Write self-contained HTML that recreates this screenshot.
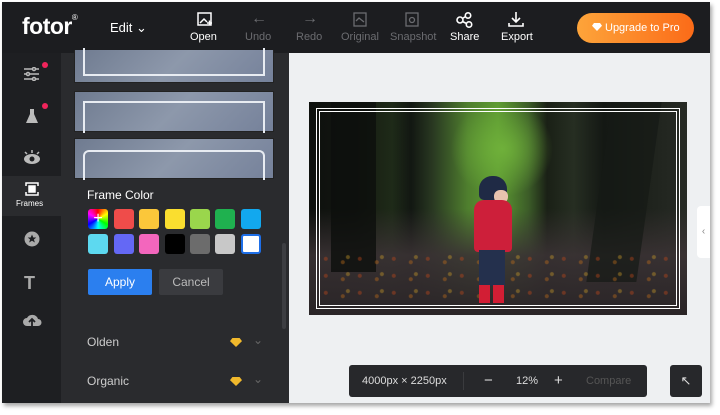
<!DOCTYPE html>
<html><head><style>
*{margin:0;padding:0;box-sizing:border-box}
body{width:720px;height:415px;background:#fff;font-family:"Liberation Sans",sans-serif;position:relative;overflow:hidden}
.app{position:absolute;left:2px;top:2px;width:708px;height:401px;background:#eef0f2;box-shadow:2px 3px 4px rgba(0,0,0,.35);overflow:hidden}
.hdr{position:absolute;left:0;top:0;width:708px;height:51px;background:#1c1d20}
.t{position:absolute;color:#fff;font-size:11px;text-align:center}
.g{color:#6b6c70}
.side{position:absolute;left:0;top:51px;width:59px;height:350px;background:#1e1f22}
.panel{position:absolute;left:59px;top:51px;width:228px;height:350px;background:#2a2b2e}
.thumb{position:absolute;left:13px;width:200px;background:linear-gradient(135deg,#6f7b90,#8d98ab 50%,#75819a);border:1px solid #222}
.sw{position:absolute;width:20px;height:20px;border-radius:3px}
.dot{position:absolute;width:6px;height:6px;border-radius:3px;background:#f0245b}
.p{position:absolute}
</style></head><body>
<div class="app">
<div class="hdr">
 <div class="t" style="left:20px;top:11px;font-size:23px;font-weight:bold;letter-spacing:-.5px">fotor<sup style="font-size:8px;vertical-align:top;font-weight:normal">®</sup></div>
 <div class="t" style="left:108px;top:18px;font-size:13px">Edit ⌄</div>
 <svg style="position:absolute;left:195px;top:10px" width="16" height="16" fill="none" stroke="#fff" stroke-width="1.5"><rect x="1" y="1" width="13" height="12"/><path d="M3 11l4-4 3 3M10 11h5M12.5 8.5v5"/></svg>
 <div class="t" style="left:188px;top:29px">Open</div>
 <div class="t g" style="left:249px;top:8px;font-size:16px">←</div><div class="t g" style="left:243px;top:29px">Undo</div>
 <div class="t g" style="left:300px;top:8px;font-size:16px">→</div><div class="t g" style="left:294px;top:29px">Redo</div>
 <svg style="position:absolute;left:351px;top:10px" width="14" height="15" fill="none" stroke="#6b6c70" stroke-width="1.3"><rect x="1" y="1" width="12" height="13"/><path d="M3 9l3-3 5 4"/></svg>
 <div class="t g" style="left:339px;top:29px">Original</div>
 <svg style="position:absolute;left:403px;top:10px" width="14" height="15" fill="none" stroke="#6b6c70" stroke-width="1.3"><rect x="1" y="1" width="12" height="13"/><circle cx="7" cy="8" r="2.5"/></svg>
 <div class="t g" style="left:388px;top:29px">Snapshot</div>
 <svg style="position:absolute;left:454px;top:10px" width="18" height="16" fill="none" stroke="#fff" stroke-width="1.6"><circle cx="4" cy="8" r="3"/><circle cx="12" cy="3.5" r="2.7"/><circle cx="13" cy="12.5" r="2.7"/><path d="M6.5 6.5l3-2M6.5 9.5l4 2"/></svg>
 <div class="t" style="left:448px;top:29px">Share</div>
 <svg style="position:absolute;left:506px;top:9px" width="16" height="17" fill="none" stroke="#fff" stroke-width="1.6"><path d="M8 1v10M4 7l4 4 4-4M1 12v3h14v-3"/></svg>
 <div class="t" style="left:499px;top:29px">Export</div>
 <div style="position:absolute;left:575px;top:11px;width:117px;height:30px;border-radius:15px;background:linear-gradient(90deg,#fda43a,#fb6b18);color:#fff;font-size:11px;line-height:30px;padding-left:28px">Upgrade to Pro</div>
 <div style="position:absolute;left:590px;top:21px;width:10px;height:8px;background:#fff;clip-path:polygon(20% 0,80% 0,100% 35%,50% 100%,0 35%)"></div>
</div>
<div class="side">
 <svg style="position:absolute;left:21px;top:14px" width="17" height="14" stroke="#bbb" stroke-width="1.5"><path d="M1 2h15M1 7h15M1 12h15"/><circle cx="11" cy="2" r="1.5" fill="#1e1f22"/><circle cx="5" cy="7" r="1.5" fill="#1e1f22"/><circle cx="11" cy="12" r="1.5" fill="#1e1f22"/></svg>
 <div class="dot" style="left:40px;top:9px"></div>
 <svg style="position:absolute;left:23px;top:55px" width="14" height="16"><path d="M4 1h6M5 1v5L1 15h12L9 6V1" fill="#bbb"/></svg>
 <div class="dot" style="left:40px;top:50px"></div>
 <svg style="position:absolute;left:21px;top:97px" width="18" height="14"><path d="M2 2l2 2M9 0v3M16 2l-2 2" stroke="#bbb" stroke-width="1.5"/><ellipse cx="9" cy="9" rx="8" ry="5" fill="#bbb"/><circle cx="9" cy="9" r="2.5" fill="#1e1f22"/></svg>
 <div style="position:absolute;left:0;top:123px;width:59px;height:40px;background:#2a2b2e"></div>
 <svg style="position:absolute;left:23px;top:129px" width="14" height="14" fill="none" stroke="#fff" stroke-width="1.5"><path d="M1 4V1h12v3M1 10v3h12v-3"/><rect x="4" y="4" width="6" height="6" fill="#fff"/></svg>
 <div class="t" style="left:14px;top:146px;font-size:8px">Frames</div>
 <svg style="position:absolute;left:22px;top:178px" width="16" height="16"><circle cx="8" cy="8" r="7.5" fill="#aaa"/><path d="M8 3.5l1.3 3h3l-2.4 2 1 3L8 9.7 5.1 11.5l1-3-2.4-2h3z" fill="#1e1f22"/></svg>
 <div style="position:absolute;left:22px;top:220px;font-size:18px;font-weight:bold;color:#aaa">T</div>
 <svg style="position:absolute;left:20px;top:258px" width="20" height="16"><path d="M5 15a4 4 0 0 1 0-8 6 6 0 0 1 11 1 3.5 3.5 0 0 1 0 7z" fill="#aaa"/><path d="M10 15V9M7 11l3-3 3 3" stroke="#1e1f22" stroke-width="1.8" fill="none"/></svg>
</div>
<div class="panel">
 <div class="thumb" style="top:-3px;height:33px;border-top:none"><div style="position:absolute;left:8px;right:8px;top:-2px;bottom:6px;border:2px solid #e8ecf2;border-top:none"></div></div>
 <div class="thumb" style="top:38px;height:41px"><div style="position:absolute;left:8px;right:8px;top:9px;bottom:-2px;border:2px solid #e8ecf2;border-bottom:none"></div></div>
 <div class="thumb" style="top:85px;height:41px"><div style="position:absolute;left:8px;right:8px;top:11px;bottom:-2px;border:2px solid #e8ecf2;border-bottom:none;border-radius:6px 6px 0 0"></div></div>
 <div class="t" style="left:26px;top:135px;font-size:12px">Frame Color</div>
 <div class="sw" style="left:27px;top:156px;background:conic-gradient(red,yellow,lime,cyan,blue,magenta,red);color:#fff;font-size:16px;line-height:19px;text-align:center">+</div>
 <div class="sw" style="left:53px;top:156px;background:#ef4c4a"></div>
 <div class="sw" style="left:78px;top:156px;background:#fbc73a"></div>
 <div class="sw" style="left:104px;top:156px;background:#fade2f"></div>
 <div class="sw" style="left:129px;top:156px;background:#9ad64c"></div>
 <div class="sw" style="left:154px;top:156px;background:#1fb14f"></div>
 <div class="sw" style="left:180px;top:156px;background:#12a8ee"></div>
 <div class="sw" style="left:27px;top:181px;background:#5dd9f0"></div>
 <div class="sw" style="left:53px;top:181px;background:#6468f5"></div>
 <div class="sw" style="left:78px;top:181px;background:#f366bd"></div>
 <div class="sw" style="left:104px;top:181px;background:#000"></div>
 <div class="sw" style="left:129px;top:181px;background:#6c6c6c"></div>
 <div class="sw" style="left:154px;top:181px;background:#c8c8c8"></div>
 <div class="sw" style="left:180px;top:181px;background:#fff;border:2px solid #1e6fe8"></div>
 <div style="position:absolute;left:27px;top:216px;width:64px;height:26px;background:#2b7fef;border-radius:2px;color:#fff;font-size:12px;text-align:center;line-height:26px">Apply</div>
 <div style="position:absolute;left:98px;top:216px;width:64px;height:26px;background:#3a3b3f;border-radius:2px;color:#bbb;font-size:12px;text-align:center;line-height:26px">Cancel</div>
 <div style="position:absolute;left:221px;top:190px;width:4px;height:86px;background:#3d3e42;border-radius:2px"></div>
 <div class="t" style="left:26px;top:282px;font-size:12px;color:#ccc">Olden</div>
 <div class="t" style="left:26px;top:321px;font-size:12px;color:#ccc">Organic</div>
 <div style="position:absolute;left:169px;top:285px;width:12px;height:9px;background:#f1b92c;clip-path:polygon(20% 0,80% 0,100% 35%,50% 100%,0 35%)"></div>
 <div style="position:absolute;left:169px;top:324px;width:12px;height:9px;background:#f1b92c;clip-path:polygon(20% 0,80% 0,100% 35%,50% 100%,0 35%)"></div>
 <div class="t" style="left:192px;top:280px;color:#666;font-size:12px">⌄</div>
 <div class="t" style="left:192px;top:319px;color:#666;font-size:12px">⌄</div>
</div>
<div style="position:absolute;left:307px;top:100px;width:378px;height:213px;overflow:hidden;background:
 radial-gradient(ellipse 18% 30% at 51% 22%,#6fb03a,transparent 75%),
 linear-gradient(180deg,transparent 50%,rgba(58,50,52,.9) 72%,#2a2527),
 linear-gradient(90deg,#0e110e 0,#121510 12%,#1a2215 17%,#1e2a18 22%,#121712 27%,#2a3a22 33%,#4f7f2e 42%,#5d9a32 50%,#3c5d28 58%,#1a2016 63%,#262e22 70%,#141814 78%,#1d211b 88%,#272b25 100%)">
 <div class="p" style="left:22px;top:0;width:45px;height:170px;background:#0d0f0c;opacity:.8"></div>
 <div class="p" style="left:290px;top:0;width:50px;height:180px;background:#161915;opacity:.7;transform:skewX(-8deg)"></div>
 <div class="p" style="left:10px;top:150px;width:360px;height:50px;background:radial-gradient(circle at 20% 40%,#c74a1a 0 1.5px,transparent 2.5px),radial-gradient(circle at 70% 60%,#c7711a 0 1.5px,transparent 2.5px),radial-gradient(circle at 85% 30%,#d0a02a 0 1.5px,transparent 2.5px);background-size:34px 17px;opacity:.4"></div>
 <div class="p" style="left:170px;top:74px;width:28px;height:24px;border-radius:13px 13px 5px 5px;background:#1f2a45"></div>
 <div class="p" style="left:185px;top:88px;width:14px;height:13px;border-radius:6px;background:#e8c3ae"></div>
 <div class="p" style="left:165px;top:98px;width:38px;height:52px;border-radius:10px 10px 4px 4px;background:#cd1f3a"></div>
 <div class="p" style="left:170px;top:148px;width:26px;height:36px;background:#24304d"></div>
 <div class="p" style="left:170px;top:183px;width:11px;height:18px;background:#d21e34"></div>
 <div class="p" style="left:184px;top:183px;width:11px;height:18px;background:#d21e34"></div>
 <div style="position:absolute;left:7px;top:6px;right:7px;bottom:6px;border:1px solid #fff;outline:1px solid #fff;outline-offset:-4px"></div>
</div>
<div style="position:absolute;left:695px;top:204px;width:13px;height:52px;background:#fff;border-radius:4px 0 0 4px;color:#888;font-size:10px;line-height:52px;text-align:center">‹</div>
<div style="position:absolute;left:347px;top:363px;width:298px;height:32px;background:#27282b;border-radius:3px;font-size:11px;line-height:32px">
 <span style="position:absolute;left:13px;color:#ddd">4000px × 2250px</span>
 <span style="position:absolute;left:114px;top:7px;width:1px;height:18px;background:#3a3b3e"></span>
 <span style="position:absolute;left:135px;color:#ddd;font-size:15px">−</span>
 <span style="position:absolute;left:167px;color:#ddd">12%</span>
 <span style="position:absolute;left:205px;color:#ddd;font-size:15px">+</span>
 <span style="position:absolute;left:237px;color:#555">Compare</span>
</div>
<div style="position:absolute;left:668px;top:363px;width:32px;height:32px;background:#27282b;border-radius:3px;color:#ddd;text-align:center;line-height:32px;font-size:13px">↖</div>
</div>
</body></html>
